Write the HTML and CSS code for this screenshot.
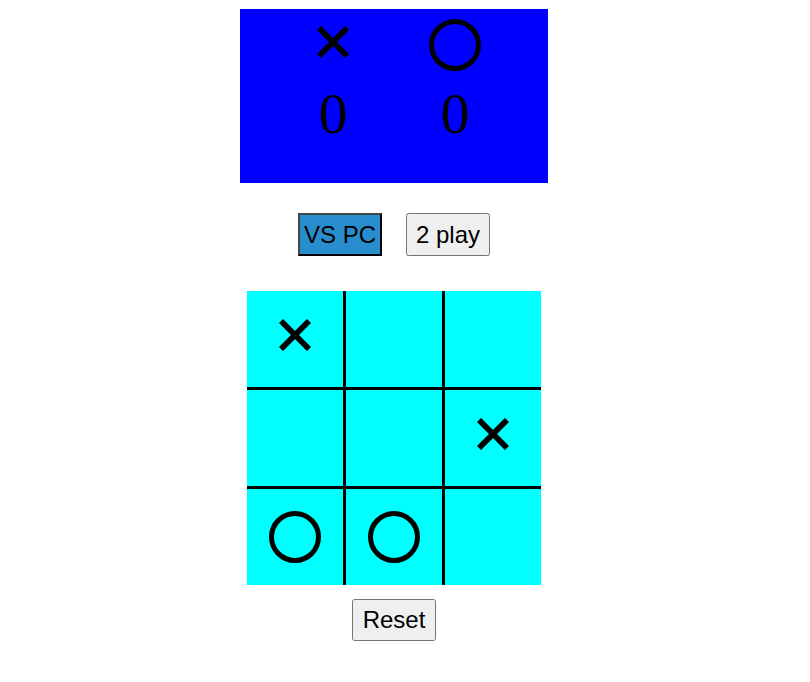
FILE: index.html
```html
<!DOCTYPE html>
<html lang="en">
<head>
<meta charset="utf-8">
<title>Tic Tac Toe</title>
<link rel="stylesheet" href="styles.css">
</head>
<body>
<div class="app">
  <div class="score">
    <div class="player">
      <div class="icon">
        <svg class="mark-x" width="32" height="32" viewBox="0 0 32 32" aria-label="X"><path d="M2 2L30 30M30 2L2 30" stroke="#000" stroke-width="5.8" fill="none"/></svg>
      </div>
      <div class="count">0</div>
    </div>
    <div class="player">
      <div class="icon">
        <svg class="mark-o" width="52" height="52" viewBox="0 0 52 52" aria-label="O"><circle cx="26" cy="26" r="23.5" stroke="#000" stroke-width="5" fill="none"/></svg>
      </div>
      <div class="count">0</div>
    </div>
  </div>

  <div class="modes">
    <button class="mode active">VS PC</button>
    <button class="mode">2 play</button>
  </div>

  <div class="board">
    <div class="cell"><svg class="mark-x" width="32" height="32" viewBox="0 0 32 32" aria-label="X"><path d="M2 2L30 30M30 2L2 30" stroke="#000" stroke-width="5.8" fill="none"/></svg></div>
    <div class="cell"></div>
    <div class="cell"></div>
    <div class="cell"></div>
    <div class="cell"></div>
    <div class="cell"><svg class="mark-x" width="32" height="32" viewBox="0 0 32 32" aria-label="X"><path d="M2 2L30 30M30 2L2 30" stroke="#000" stroke-width="5.8" fill="none"/></svg></div>
    <div class="cell"><svg class="mark-o" width="52" height="52" viewBox="0 0 52 52" aria-label="O"><circle cx="26" cy="26" r="23.5" stroke="#000" stroke-width="5" fill="none"/></svg></div>
    <div class="cell"><svg class="mark-o" width="52" height="52" viewBox="0 0 52 52" aria-label="O"><circle cx="26" cy="26" r="23.5" stroke="#000" stroke-width="5" fill="none"/></svg></div>
    <div class="cell"></div>
  </div>

  <button class="reset">Reset</button>
</div>
</body>
</html>
```

FILE: styles.css
```css
body {
  margin: 0;
  font-family: "Liberation Sans", Arial, sans-serif;
  background: #fff;
}

.app {
  width: 788px;
  padding-top: 9px;
  display: flex;
  flex-direction: column;
  align-items: center;
}

.score {
  width: 308px;
  height: 174px;
  background: #0000ff;
  display: flex;
  justify-content: center;
}

.player {
  width: 122px;
  display: flex;
  flex-direction: column;
  align-items: center;
}

.icon {
  height: 52px;
  margin-top: 10px;
  display: flex;
  align-items: flex-start;
}

.icon .mark-x {
  margin-top: 7px;
}

.count {
  margin-top: 14px;
  font-family: "Liberation Serif", "Times New Roman", serif;
  font-size: 58px;
  line-height: 58px;
  color: #000;
}

.modes {
  margin-top: 30px;
  display: flex;
  gap: 24px;
}

.mode,
.reset {
  width: 84px;
  height: 43px;
  padding: 0;
  font-family: "Liberation Sans", Arial, sans-serif;
  font-size: 24px;
  color: #000;
}

.mode.active {
  background-color: #288dcc;
  border-color: #444;
}

.board {
  margin-top: 35px;
  display: grid;
  grid-template-columns: repeat(3, 96px);
  grid-template-rows: repeat(3, 96px);
  gap: 3px;
  background: #000;
}

.cell {
  background: #00ffff;
  display: flex;
  align-items: center;
  justify-content: center;
}

.cell .mark-x {
  margin-bottom: 9px;
}

.reset {
  margin-top: 14px;
  height: 42px;
}
```
